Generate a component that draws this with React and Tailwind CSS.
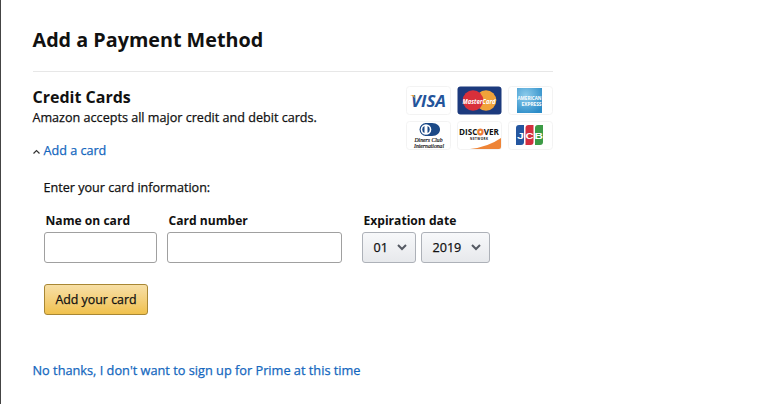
import { useState } from 'react';

const Chevron = () => (
  <svg width="10" height="7" viewBox="0 0 10 7" fill="none" stroke="#555a63" strokeWidth="2">
    <path d="M1 1l4 4 4-4" />
  </svg>
);

const Visa = () => (
  <svg width="45" height="29" viewBox="0 0 45 29">
    <rect x=".5" y=".5" width="44" height="28" rx="3" fill="#fff" stroke="#f3f3f3" />
    <text x="5" y="20.500" textLength="35" lengthAdjust="spacingAndGlyphs" fontFamily="Open Sans, sans-serif" fontSize="16" fontWeight="700" fontStyle="italic" fill="#24549b">VISA</text>
    <path d="M4 9h4l1.500 4C8.500 11 7 10 4 9z" fill="#e8a33a" />
  </svg>
);

const MasterCard = () => (
  <svg width="45" height="29" viewBox="0 0 45 29">
    <rect x=".5" y=".5" width="44" height="28" rx="3" fill="#1c3a7d" />
    <circle cx="29" cy="14.500" r="10.300" fill="#f0a23a" />
    <circle cx="16" cy="14.500" r="10.300" fill="#d8303a" />
    <text x="5.500" y="17.500" textLength="33" lengthAdjust="spacingAndGlyphs" fontFamily="Open Sans, sans-serif" fontSize="7.500" fontWeight="700" fontStyle="italic" fill="#fff">MasterCard</text>
  </svg>
);

const Amex = () => (
  <svg width="45" height="29" viewBox="0 0 45 29">
    <defs>
      <radialGradient id="amex" cx=".35" cy=".3" r=".8">
        <stop offset="0" stopColor="#8ccbeb" />
        <stop offset="1" stopColor="#2b8cc8" />
      </radialGradient>
    </defs>
    <rect x=".5" y=".5" width="44" height="28" rx="3" fill="#fff" stroke="#f3f3f3" />
    <rect x="9" y="2" width="25" height="25" fill="url(#amex)" />
    <g fontFamily="Open Sans, sans-serif" fontSize="6" fontWeight="700" fill="#fff">
      <text x="9.500" y="13.500" textLength="24" lengthAdjust="spacingAndGlyphs">AMERICAN</text>
      <text x="13.500" y="19.500" textLength="20" lengthAdjust="spacingAndGlyphs">EXPRESS</text>
    </g>
  </svg>
);

const Diners = () => (
  <svg width="45" height="29" viewBox="0 0 45 29">
    <rect x=".5" y=".5" width="44" height="28" rx="3" fill="#fff" stroke="#f3f3f3" />
    <path d="M19 2h7c5 0 8 3 8 6.500S31 15 26 15h-7z" fill="#1c4a87" />
    <circle cx="20" cy="8.500" r="6.500" fill="#1c4a87" />
    <circle cx="20" cy="8.500" r="5.300" fill="#fff" />
    <path d="M18.500 5a3.800 3.800 0 0 0 0 7zM21.500 5a3.800 3.800 0 0 1 0 7z" fill="#1c4a87" />
    <g fontFamily="Liberation Serif, serif" fontSize="6.500" fontStyle="italic" fill="#111" stroke="#111" strokeWidth=".2">
      <text x="8.500" y="21" textLength="28" lengthAdjust="spacingAndGlyphs">Diners Club</text>
      <text x="8" y="27" textLength="30" lengthAdjust="spacingAndGlyphs">International</text>
    </g>
  </svg>
);

const Discover = () => (
  <svg width="45" height="29" viewBox="0 0 45 29">
    <rect x=".5" y=".5" width="44" height="28" rx="3" fill="#fff" stroke="#f3f3f3" />
    <path d="M44 17v9q0 2-2 2H13q18-2 31-11z" fill="#ee8437" />
    <g fontFamily="Open Sans, sans-serif" fontWeight="700" fill="#111">
      <text x="2" y="14" fontSize="8.500" textLength="40" lengthAdjust="spacingAndGlyphs">
        DISC<tspan fill="#ee7a2b" stroke="#ee7a2b" strokeWidth=".8">O</tspan>VER
      </text>
      <text x="13" y="18.500" fontSize="3" textLength="18">NETWORK</text>
    </g>
  </svg>
);

const Jcb = () => (
  <svg width="45" height="29" viewBox="0 0 45 29">
    <rect x=".5" y=".5" width="44" height="28" rx="3" fill="#fff" stroke="#f3f3f3" />
    <path d="M11 4h5v17q0 3-3 3H8V7q0-3 3-3z" fill="#24569f" />
    <path d="M20.500 4h5v17q0 3-3 3h-5V7q0-3 3-3z" fill="#d32f3f" />
    <path d="M30 4h5v17q0 3-3 3h-5V7q0-3 3-3z" fill="#3c9b46" />
    <g fontFamily="Liberation Sans, sans-serif" fontSize="9.500" fontWeight="700" fill="#fff">
      <text x="9" y="17.500" textLength="7" lengthAdjust="spacingAndGlyphs">J</text>
      <text x="17.500" y="17.500" textLength="8" lengthAdjust="spacingAndGlyphs">C</text>
      <text x="26.500" y="17.500" textLength="8.500" lengthAdjust="spacingAndGlyphs">B</text>
    </g>
  </svg>
);

export default function App() {
  const [open, setOpen] = useState(true);
  const [name, setName] = useState('');
  const [number, setNumber] = useState('');

  return (
    <div className="h-[404px] overflow-hidden border-l border-[#444] bg-white pl-[31.5px] pt-[25px] font-['Open_Sans',sans-serif] text-[12.6px] leading-5 text-[#111]">
      <div className="w-[520px]">
        <h1 className="h-[46px] whitespace-nowrap text-[19.75px] font-bold leading-[30px]">Add a Payment Method</h1>
        <div className="flex justify-between border-t border-[#e7e7e7] pt-[14px]">
          <div>
            <h2 className="-mt-px text-[16px] font-bold leading-6">Credit Cards</h2>
            <p className="-mt-px whitespace-nowrap [-webkit-text-stroke:0.25px]">Amazon accepts all major credit and debit cards.</p>
            <button onClick={() => setOpen(!open)} className="mt-[13px] flex items-center gap-1 text-[#1467be] [-webkit-text-stroke:0.25px]">
              <svg width="7" height="5" viewBox="0 0 7 5" fill="none" stroke="#333" strokeWidth="1.2"><path d="M.5 4.500l3-3 3 3" /></svg>
              Add a card
            </button>
          </div>
          <div className="grid h-[64px] grid-cols-3 gap-[6px]">
            <Visa />
            <MasterCard />
            <Amex />
            <Diners />
            <Discover />
            <Jcb />
          </div>
        </div>
        {open && (
          <div className="pl-[11px] pt-[17px]">
            <p className="[-webkit-text-stroke:0.25px]">Enter your card information:</p>
            <div className="mt-[13px] flex">
              <label className="mr-[10px] w-[113px]">
                <span className="block pl-[2px] text-[12.1px] font-bold">Name on card</span>
                <input value={name} onChange={e => setName(e.target.value)} className="mt-px block h-[31px] w-full rounded-[3px] border border-[#a0a0a0] px-2" />
              </label>
              <label className="mr-5 w-[175px]">
                <span className="block pl-[2px] text-[12.1px] font-bold">Card number</span>
                <input value={number} onChange={e => setNumber(e.target.value)} className="mt-px block h-[31px] w-full rounded-[3px] border border-[#a0a0a0] px-2" />
              </label>
              <div>
                <div className="pl-[2px] text-[12.1px] font-bold">Expiration date</div>
                <div className="mt-px flex gap-[5px] [-webkit-text-stroke:0.25px]">
                  <button className="flex h-[31px] w-[54px] items-center justify-between rounded-[3px] border border-[#adb1b8] bg-linear-to-b from-[#f7f8fa] to-[#e7e9ec] pl-[11px] pr-2">01<Chevron /></button>
                  <button className="flex h-[31px] w-[69px] items-center justify-between rounded-[3px] border border-[#adb1b8] bg-linear-to-b from-[#f7f8fa] to-[#e7e9ec] pl-[11px] pr-2">2019<Chevron /></button>
                </div>
              </div>
            </div>
            <button className="mt-[21px] h-[31px] w-[104px] whitespace-nowrap rounded-[3px] border border-[#a88734] bg-linear-to-b from-[#f7dfa5] to-[#f0c14b] pl-px text-[12.4px] [-webkit-text-stroke:0.25px]">Add your card</button>
          </div>
        )}
        <a href="#" className="mt-[45px] block whitespace-nowrap text-[12.75px] text-[#1467be] [-webkit-text-stroke:0.25px]">No thanks, I don't want to sign up for Prime at this time</a>
      </div>
    </div>
  );
}
